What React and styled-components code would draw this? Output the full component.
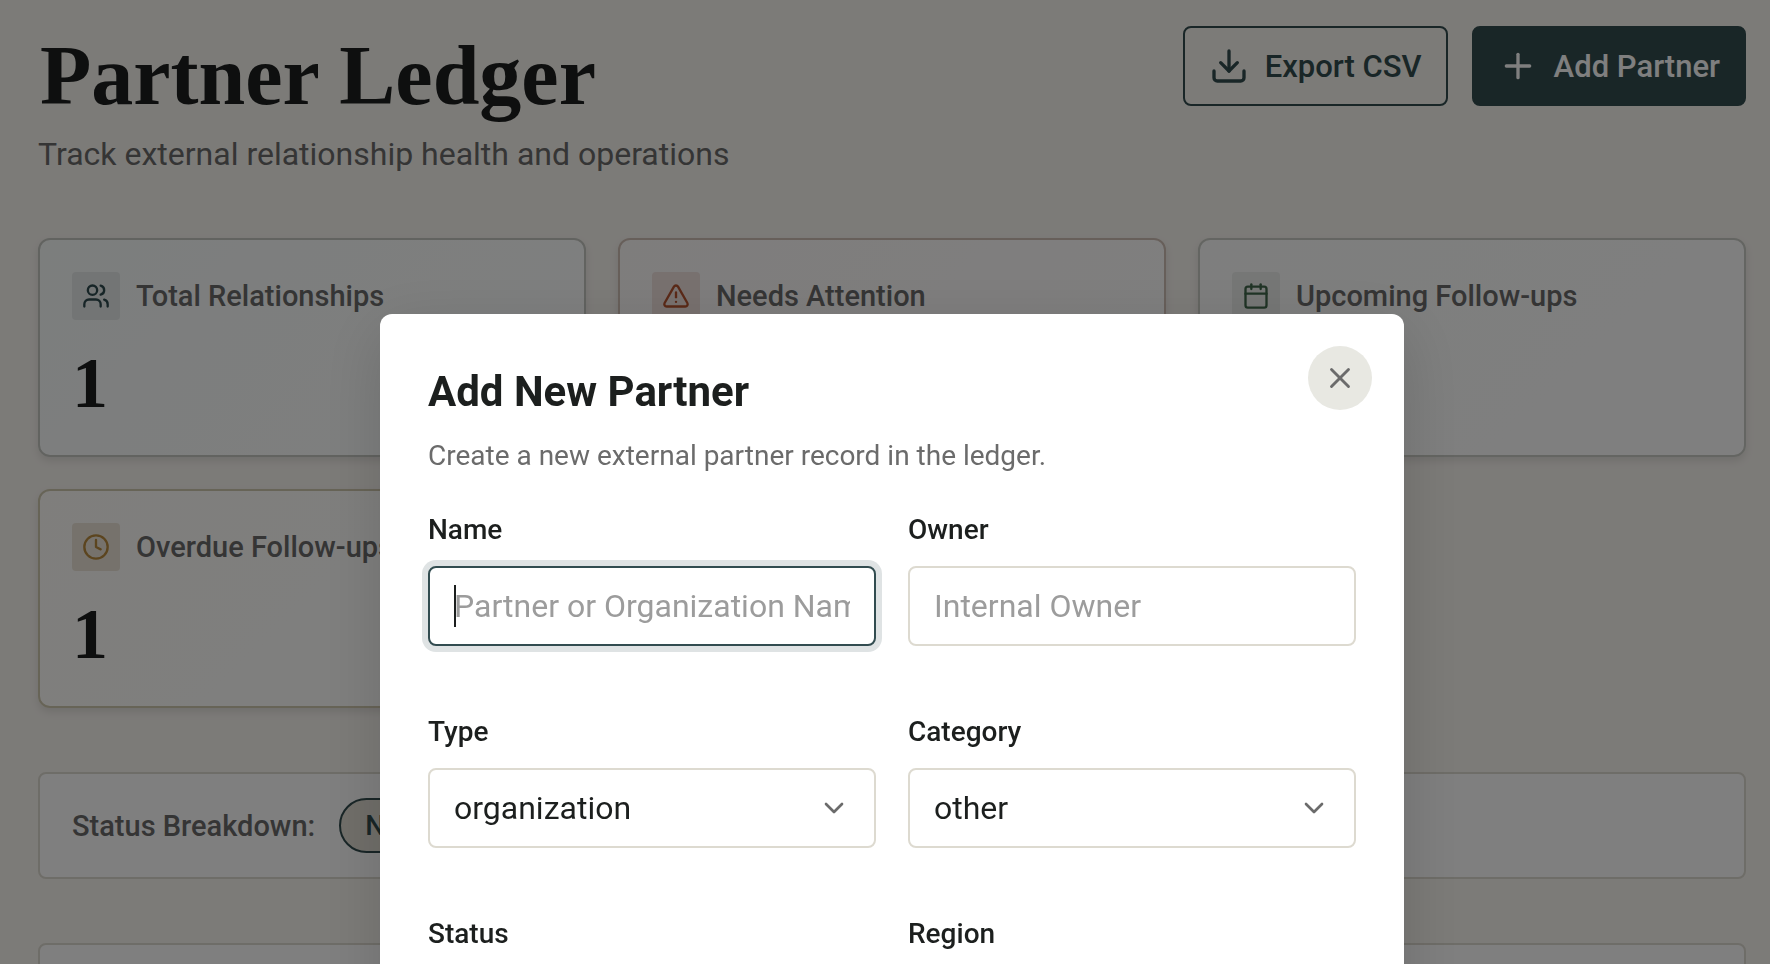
import React, { useState } from "react";
import styled, { createGlobalStyle } from "styled-components";
import {
  Calendar,
  ChevronDown,
  Clock,
  Download,
  Plus,
  TriangleAlert,
  Users,
  X,
} from "lucide-react";

const stats = [
  {
    label: "Total Relationships",
    value: 1,
    icon: Users,
    color: "#2f4a4f",
    tile: "#e6ebea",
    border: "#c4c6c0",
    tint: "#f8fcfb",
  },
  {
    label: "Needs Attention",
    value: 0,
    icon: TriangleAlert,
    color: "#b5532f",
    tile: "#f0e2de",
    border: "#cfbfb5",
    tint: "#fdfaf9",
  },
  {
    label: "Upcoming Follow-ups",
    value: 0,
    icon: Calendar,
    color: "#41684c",
    tile: "#eceeec",
    border: "#c9cbc4",
    tint: "#fcfdfc",
  },
  {
    label: "Overdue Follow-ups",
    value: 1,
    icon: Clock,
    color: "#b98a3e",
    tile: "#ece5d8",
    border: "#cfc8ae",
    tint: "#fffdf9",
  },
];

const StatCard = ({ stat }) => {
  const Icon = stat.icon;
  return (
    <Card $border={stat.border} $tint={stat.tint}>
      <CardHead>
        <IconTile $color={stat.color} $tile={stat.tile}>
          <Icon size={28} />
        </IconTile>
        <MutedLabel>{stat.label}</MutedLabel>
      </CardHead>
      {stat.value > 0 && <CardValue>{stat.value}</CardValue>}
    </Card>
  );
};

const TextField = ({ id, label, placeholder, autoFocus }) => {
  const [value, setValue] = useState("");
  return (
    <Field>
      <Label htmlFor={id}>{label}</Label>
      <Control>
        <Input
          id={id}
          value={value}
          placeholder={placeholder}
          autoFocus={autoFocus}
          onChange={(e) => setValue(e.target.value)}
        />
        {autoFocus && value === "" && <Caret />}
      </Control>
    </Field>
  );
};

const SelectField = ({ id, label, options }) => (
  <Field>
    <Label htmlFor={id}>{label}</Label>
    <Control>
      <Select id={id}>
        {options.map((option) => (
          <option key={option}>{option}</option>
        ))}
      </Select>
      <Chevron>
        <ChevronDown size={32} />
      </Chevron>
    </Control>
  </Field>
);

const App = () => {
  const [open, setOpen] = useState(true);
  return (
    <>
      <GlobalStyle />
      <Page>
        <Header>
          <div>
            <Title>Partner Ledger</Title>
            <Subtitle>Track external relationship health and operations</Subtitle>
          </div>
          <Actions>
            <Button>
              <Download size={40} />
              Export CSV
            </Button>
            <Button $primary onClick={() => setOpen(true)}>
              <Plus size={40} />
              Add Partner
            </Button>
          </Actions>
        </Header>
        <Stats>
          {stats.map((stat) => (
            <StatCard key={stat.label} stat={stat} />
          ))}
        </Stats>
        <Panel>
          <MutedLabel>Status Breakdown:</MutedLabel>
          <Badge>New: 1</Badge>
        </Panel>
        <Panel />
      </Page>
      {open && (
        <Overlay>
          <Dialog role="dialog" aria-modal="true" aria-labelledby="dialog-title">
            <Close aria-label="Close" onClick={() => setOpen(false)}>
              <X size={34} />
            </Close>
            <DialogTitle id="dialog-title">Add New Partner</DialogTitle>
            <DialogText>
              Create a new external partner record in the ledger.
            </DialogText>
            <Form>
              <TextField
                id="name"
                label="Name"
                placeholder="Partner or Organization Name"
                autoFocus
              />
              <TextField id="owner" label="Owner" placeholder="Internal Owner" />
              <SelectField
                id="type"
                label="Type"
                options={["organization", "individual"]}
              />
              <SelectField
                id="category"
                label="Category"
                options={["other", "vendor"]}
              />
              <SelectField id="status" label="Status" options={["new", "active"]} />
              <TextField id="region" label="Region" placeholder="Region" />
            </Form>
          </Dialog>
        </Overlay>
      )}
    </>
  );
};

export default App;

const GlobalStyle = createGlobalStyle`
  * {
    box-sizing: border-box;
  }
  html,
  body {
    margin: 0;
    height: 100%;
    overflow: hidden;
  }
  body {
    background: #f9f6f1;
    color: #1c1f1e;
    font-family: Roboto, "Liberation Sans", sans-serif;
    font-size: 32px;
  }
  h1, h2, p {
    margin: 0;
  }
  button, input, select {
    font: inherit;
    color: inherit;
  }
`;

const Page = styled.main`
  display: flex;
  flex-direction: column;
  gap: 64px;
  padding: 26px 24px 64px 38px;
`;

const Header = styled.header`
  display: flex;
  align-items: flex-start;
  justify-content: space-between;
  height: 148px;
`;

const Title = styled.h1`
  padding-left: 2px;
  font-family: "Liberation Serif", serif;
  font-size: 84px;
  font-weight: 700;
  line-height: 100px;
`;

const Subtitle = styled.p`
  color: #6b6b6b;
  line-height: 56px;
`;

const Actions = styled.div`
  display: flex;
  gap: 24px;
`;

const Button = styled.button`
  display: flex;
  align-items: center;
  gap: 16px;
  height: 80px;
  padding: 0 24px;
  border: 2px solid #324c4e;
  border-radius: 8px;
  background: ${(props) => (props.$primary ? "#324c4e" : "transparent")};
  color: ${(props) => (props.$primary ? "#ffffff" : "#324c4e")};
  font-size: 31px;
  font-weight: 500;
  cursor: pointer;
`;

const Stats = styled.section`
  display: grid;
  grid-template-columns: repeat(3, 1fr);
  gap: 32px;
`;

const Card = styled.article`
  min-height: 219px;
  padding: 32px;
  border: 2px solid ${(props) => props.$border};
  border-radius: 12px;
  background: linear-gradient(135deg, ${(props) => props.$tint}, #ffffff);
  box-shadow: 0 4px 8px rgba(0, 0, 0, 0.1);
`;

const CardHead = styled.div`
  display: flex;
  align-items: center;
  gap: 16px;
`;

const IconTile = styled.span`
  display: grid;
  place-items: center;
  width: 48px;
  height: 48px;
  border-radius: 4px;
  background: ${(props) => props.$tile};
  color: ${(props) => props.$color};
`;

const MutedLabel = styled.span`
  color: #6b6b6b;
  font-size: 29px;
  font-weight: 500;
`;

const CardValue = styled.p`
  margin-top: 24px;
  font-family: "Liberation Serif", serif;
  font-size: 72px;
  font-weight: 700;
  line-height: 79px;
`;

const Panel = styled.section`
  display: flex;
  align-items: center;
  gap: 24px;
  height: 107px;
  padding: 0 32px;
  border: 2px solid #dddad0;
  border-radius: 8px;
  background: #ffffff;
`;

const Badge = styled.span`
  padding: 0 24px;
  border: 2px solid #324c4e;
  border-radius: 28px;
  background: #e2ded4;
  color: #324c4e;
  font-size: 28px;
  font-weight: 500;
  line-height: 51px;
`;

const Overlay = styled.div`
  position: fixed;
  inset: 0;
  display: flex;
  justify-content: center;
  align-items: flex-start;
  padding: 314px 0 0 14px;
  background: rgba(0, 0, 0, 0.5);
`;

const Dialog = styled.section`
  position: relative;
  width: 1024px;
  padding: 48px;
  border-radius: 12px;
  background: #ffffff;
  box-shadow: 0 16px 64px rgba(0, 0, 0, 0.15);
`;

const Close = styled.button`
  position: absolute;
  top: 32px;
  right: 32px;
  display: grid;
  place-items: center;
  width: 64px;
  height: 64px;
  padding: 0;
  border: 0;
  border-radius: 50%;
  background: #e8e8e2;
  color: #6b6b6b;
  cursor: pointer;
`;

const DialogTitle = styled.h2`
  font-size: 42px;
  font-weight: 700;
  line-height: 60px;
`;

const DialogText = styled.p`
  margin-top: 12px;
  color: #6b6b6b;
  font-size: 28px;
  line-height: 44px;
`;

const Form = styled.form`
  display: grid;
  grid-template-columns: 1fr 1fr;
  gap: 66px 32px;
  margin-top: 32px;
`;

const Field = styled.div`
  display: flex;
  flex-direction: column;
  gap: 16px;
`;

const Label = styled.label`
  font-size: 28px;
  font-weight: 500;
  line-height: 40px;
`;

const Control = styled.div`
  position: relative;
`;

const Input = styled.input`
  display: block;
  width: 100%;
  height: 80px;
  padding: 0 24px;
  border: 2px solid #dddad0;
  border-radius: 8px;
  background: #ffffff;
  &::placeholder {
    color: #9c9c9c;
  }
  &:placeholder-shown {
    caret-color: transparent;
  }
  &:focus {
    outline: none;
    border-color: #324c50;
    box-shadow: 0 0 0 6px #dfe3e4;
  }
`;

const Caret = styled.span`
  position: absolute;
  top: 19px;
  left: 26px;
  width: 2px;
  height: 42px;
  background: #1c1f1e;
  pointer-events: none;
`;

const Select = styled.select`
  display: block;
  width: 100%;
  height: 80px;
  padding: 0 72px 0 24px;
  border: 2px solid #dddad0;
  border-radius: 8px;
  background: #ffffff;
  appearance: none;
`;

const Chevron = styled.span`
  position: absolute;
  top: 24px;
  right: 26px;
  display: flex;
  color: #6b6b6b;
  pointer-events: none;
`;
